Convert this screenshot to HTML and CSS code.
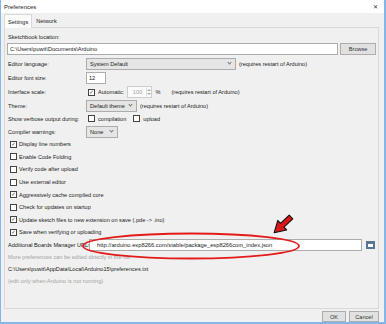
FILE: index.html
```html
<!DOCTYPE html>
<html lang="en">
<head>
    <meta charset="UTF-8">
    <title>Preferences</title>
    <link rel="stylesheet" href="styles.css">
</head>
<body>
    <div class="window">
        <div class="titlebar">
            <span class="titlebar__text">Preferences</span>
            <span class="titlebar__close">&#x2715;</span>
        </div>

        <div class="dialog">
            <div class="tabs">
                <span class="tab tab--active">Settings</span>
                <span class="tab">Network</span>
            </div>

            <div class="panel">
                <div class="line">Sketchbook location:</div>
                <div class="path-row">
                    <span class="field field--path">C:\Users\puwit\Documents\Arduino</span>
                    <span class="button button--browse">Browse</span>
                </div>

                <div class="form">
                    <span class="form__label">Editor language:</span>
                    <span class="form__control">
                        <span class="select select--lang">System Default<i class="chev"></i></span>
                        <span class="note">(requires restart of Arduino)</span>
                    </span>

                    <span class="form__label">Editor font size:</span>
                    <span class="form__control">
                        <span class="field field--size">12</span>
                    </span>

                    <span class="form__label">Interface scale:</span>
                    <span class="form__control">
                        <span class="check check--on"></span>
                        <span class="note">Automatic:</span>
                        <span class="spinner">100<i class="spin"></i></span>
                        <span class="note">%</span>
                        <span class="note note--far">(requires restart of Arduino)</span>
                    </span>

                    <span class="form__label">Theme:</span>
                    <span class="form__control">
                        <span class="select select--theme">Default theme<i class="chev"></i></span>
                        <span class="note">(requires restart of Arduino)</span>
                    </span>

                    <span class="form__label">Show verbose output during:</span>
                    <span class="form__control">
                        <span class="check"></span>
                        <span class="note">compilation</span>
                        <span class="check check--gap"></span>
                        <span class="note">upload</span>
                    </span>

                    <span class="form__label">Compiler warnings:</span>
                    <span class="form__control">
                        <span class="select select--warn">None<i class="chev"></i></span>
                    </span>
                </div>

                <ul class="options">
                    <li class="option"><span class="check check--on"></span>Display line numbers</li>
                    <li class="option"><span class="check"></span>Enable Code Folding</li>
                    <li class="option"><span class="check"></span>Verify code after upload</li>
                    <li class="option"><span class="check"></span>Use external editor</li>
                    <li class="option"><span class="check check--on"></span>Aggressively cache compiled core</li>
                    <li class="option"><span class="check"></span>Check for updates on startup</li>
                    <li class="option"><span class="check check--on"></span>Update sketch files to new extension on save (.pde -&gt; .ino)</li>
                    <li class="option"><span class="check check--on"></span>Save when verifying or uploading</li>
                </ul>

                <div class="url-row">
                    <span class="url-row__label">Additional Boards Manager URLs:</span>
                    <span class="field field--url">http://arduino.esp8266.com/stable/package_esp8266com_index.json</span>
                    <span class="url-row__icon"><i></i></span>
                </div>

                <div class="line line--muted">More preferences can be edited directly in the file</div>
                <div class="line">C:\Users\puwit\AppData\Local\Arduino15\preferences.txt</div>
                <div class="line line--muted">(edit only when Arduino is not running)</div>
            </div>

            <div class="actions">
                <span class="button button--ok">OK</span>
                <span class="button button--cancel">Cancel</span>
            </div>
        </div>

        <!-- annotation drawn over the screenshot -->
        <svg class="markup" width="386" height="324" viewBox="0 0 386 324">
            <ellipse cx="191" cy="246" rx="108" ry="12.5" fill="none" stroke="#e31b1b" stroke-width="1.8"/>
            <polygon points="0,-2.6 12,-2.6 12,-6.5 23,0 12,6.5 12,2.6 0,2.6"
                     transform="translate(291 217) rotate(137)"
                     fill="#d81818" stroke="#111" stroke-width="1.1" stroke-linejoin="round"/>
        </svg>
    </div>
</body>
</html>
```

FILE: styles.css
```css
:root {
    --bg: #f0f0f0;
    --frame: #85b6e8;
    --line: #d9d9d9;
    --field-border: #acacac;
    --text: #222;
    --muted: #a3a3a3;
    --font: "Liberation Sans", Arial, sans-serif;
}

* { box-sizing: border-box; }

body {
    margin: 0;
    font-family: var(--font);
    font-size: 5.6px;
    color: var(--text);
}

ul { list-style: none; margin: 0; padding: 0; }

.window {
    position: relative;
    width: 386px;
    height: 324px;
    display: flex;
    flex-direction: column;
    border: solid var(--frame);
    border-width: 0 2px 2px 1px;
    background: var(--bg);
    overflow: hidden;
}

/* Title bar */
.titlebar {
    height: 14px;
    display: flex;
    align-items: center;
    justify-content: space-between;
    padding: 0 6px 0 3px;
    background: #fff;
    font-size: 6px;
}

.titlebar__close { font-size: 6px; color: #333; }

/* Dialog body */
.dialog {
    flex: 1;
    display: flex;
    flex-direction: column;
    padding: 1px 5px 0 3px;
}

.tabs {
    height: 13px;
    display: flex;
    align-items: stretch;
}

.tab {
    display: flex;
    align-items: center;
    padding: 0 3px;
    margin-right: 1px;
}

.tab--active {
    background: #fbfbfb;
    border: 1px solid var(--line);
    border-bottom: none;
    margin-bottom: -1px;
    position: relative;
}

.panel {
    height: 282px;
    border: 1px solid var(--line);
    padding: 4px 2px 0 3px;
}

.line {
    height: 12px;
    line-height: 12px;
    white-space: nowrap;
}

.line--muted { color: var(--muted); }

.panel > .line:first-child { height: 11px; line-height: 11px; }

.path-row {
    display: flex;
    gap: 2px;
    height: 12px;
    margin-left: -1px;
}

.field {
    display: flex;
    align-items: center;
    height: 12px;
    padding: 0 2px;
    background: #fff;
    border: 1px solid var(--field-border);
    white-space: nowrap;
}

.field--path { width: 334px; }
.field--size { width: 20px; }
.field--url { width: 275px; padding-left: 7px; font-size: 5.75px; }

.button {
    display: flex;
    align-items: center;
    justify-content: center;
    height: 11px;
    background: #e1e1e1;
    border: 1px solid #adadad;
    color: #333;
}

.button--browse { width: 36px; height: 12px; }
.button--ok { width: 24px; }
.button--cancel { width: 30px; }

/* Label / control grid */
.form {
    display: grid;
    grid-template-columns: 78px 1fr;
    grid-template-rows: 14px 14px 14px 13px 13px 14px;
    margin-top: 2px;
}

.form__label,
.form__control {
    display: flex;
    align-items: center;
    white-space: nowrap;
}

.form__control { gap: 3px; }

.select {
    position: relative;
    display: flex;
    align-items: center;
    height: 12px;
    padding: 0 3px;
    background: #e5e5e5;
    border: 1px solid var(--field-border);
}

.select--lang { width: 150px; }
.select--theme { width: 51px; }
.select--warn { width: 32px; }

.chev {
    position: absolute;
    right: 4px;
    top: 2px;
    width: 3px;
    height: 3px;
    border-right: 1px solid #777;
    border-bottom: 1px solid #777;
    transform: rotate(45deg);
}

.spinner {
    position: relative;
    display: flex;
    align-items: center;
    justify-content: center;
    width: 25px;
    height: 12px;
    padding-right: 5px;
    background: #fafafa;
    border: 1px solid #ccc;
    color: var(--muted);
}

.spin {
    position: absolute;
    right: 1px;
    top: 1px;
    width: 4px;
    height: 8px;
    border-left: 1px solid #ddd;
}

.spin::before,
.spin::after {
    content: "";
    position: absolute;
    left: 0;
    border-left: 2px solid transparent;
    border-right: 2px solid transparent;
}

.spin::before { top: 1px; border-bottom: 2px solid #aaa; }
.spin::after { bottom: 1px; border-top: 2px solid #aaa; }

.note--far { margin-left: 8px; }

.check {
    position: relative;
    flex: none;
    width: 7px;
    height: 7px;
    margin-left: 2px;
    background: #fff;
    border: 1px solid #444;
}

.check--gap { margin-left: 4px; }

.check--on::after {
    content: "\2713";
    position: absolute;
    left: 0;
    top: -1px;
    width: 5px;
    font-family: "DejaVu Sans", sans-serif;
    font-size: 5.5px;
    line-height: 7px;
    text-align: center;
    color: #333;
}

/* Checkbox list */
.options { margin-top: -1px; }

.option {
    display: flex;
    align-items: center;
    gap: 2px;
    height: 12.6px;
    white-space: nowrap;
}

.url-row {
    display: flex;
    align-items: center;
    height: 12px;
    white-space: nowrap;
}

.url-row__label { flex: none; width: 81px; }

.url-row__icon {
    display: flex;
    align-items: center;
    justify-content: center;
    width: 11px;
    height: 11px;
    margin-left: 3px;
}

.url-row__icon i {
    width: 9px;
    height: 8px;
    background: #fff;
    border: 2px solid #5a7591;
    border-top-width: 3px;
}

/* Footer buttons */
.actions {
    display: flex;
    justify-content: flex-end;
    gap: 3px;
    padding-top: 2px;
}

/* Red highlight annotation */
.markup {
    position: absolute;
    top: 0;
    left: -1px;
    pointer-events: none;
}
```
